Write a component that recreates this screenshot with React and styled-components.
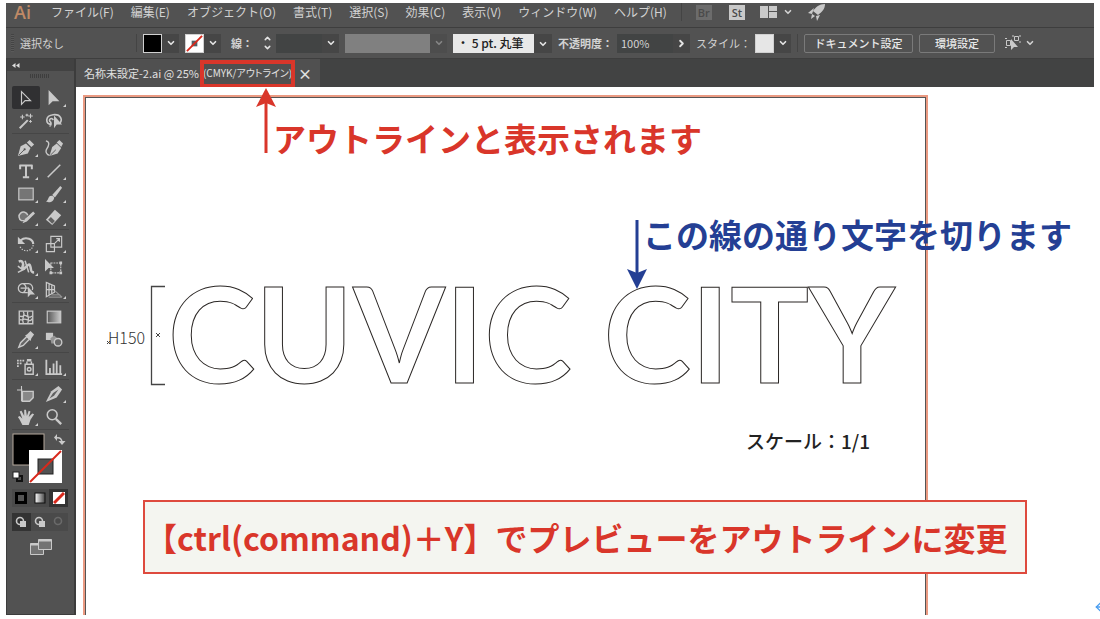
import React from "react";
import styled, { createGlobalStyle } from "styled-components";
import { ArrowLeft, ChevronDown, ChevronRight, ChevronUp } from "lucide-react";

const menus = [
  "ファイル(F)",
  "編集(E)",
  "オブジェクト(O)",
  "書式(T)",
  "選択(S)",
  "効果(C)",
  "表示(V)",
  "ウィンドウ(W)",
  "ヘルプ(H)",
];

const L = "#c9c9c9";

const toolGroups = [
  [
    {
      name: "選択",
      active: true,
      art: <path d="M5 3v14l4-4h6z" fill="none" stroke={L} strokeWidth="1.3" />,
    },
    { name: "ダイレクト選択", more: true, art: <path d="M4 1v17l4.500-4.500H16z" fill={L} /> },
    {
      name: "自動選択",
      art: (
        <g stroke={L} fill="none">
          <path d="M3 18L12 9" strokeWidth="2.2" />
          <path d="M6 3v5M3.5 5.5h5M11 2v3M9.5 3.5h3M15 2v5M12.5 4.5h5M15 9v3M13.5 10.5h3" strokeWidth="1.2" />
        </g>
      ),
    },
    {
      name: "なげなわ",
      art: (
        <g>
          <path
            d="M7 14C0 13 0 4 9 3s11 6 7 10M9 9a2 2 0 1 0-3 2c1 1 1 4-1 5"
            fill="none"
            stroke={L}
            strokeWidth="1.8"
          />
          <path d="M10 4v14l3-4h6z" fill={L} />
        </g>
      ),
    },
  ],
  [
    {
      name: "ペン",
      more: true,
      art: (
        <g>
          <path d="M1 19l3-11 6-3 5 5-3 6z" fill={L} />
          <path d="M11 4l3-3 5 5-3 3z" fill={L} />
          <path d="M2 18L8 12" stroke="#525252" />
          <circle cx="8.500" cy="11.500" r="1.200" fill="#525252" />
        </g>
      ),
    },
    {
      name: "曲線",
      art: (
        <g>
          <path d="M5 19l3-10 5-4 5 5-4 6z" fill={L} />
          <path d="M13 4l3-3 4 4-2 4z" fill={L} />
          <path d="M1 2c5 1 3 6 1 9s0 7 3 7" fill="none" stroke={L} strokeWidth="1.5" />
          <path d="M6 18L12 12" stroke="#525252" />
        </g>
      ),
    },
    {
      name: "文字",
      more: true,
      art: <path d="M3 4h14M3.5 3v5M16.5 3v5M10 4v13M6.5 17h7" stroke={L} strokeWidth="2.2" />,
    },
    { name: "直線", more: true, art: <path d="M3 17L17 3" stroke={L} strokeWidth="1.7" /> },
    {
      name: "長方形",
      more: true,
      art: <rect x="2" y="3.5" width="16" height="13" fill="#757575" stroke={L} strokeWidth="1.3" />,
    },
    {
      name: "ブラシ",
      more: true,
      art: (
        <g fill={L}>
          <path d="M1 18c3 0 2-6 6-6s4 4 1 6-4 1-7 0z" />
          <path d="M8 11l9-10 2 2-8 11z" />
        </g>
      ),
    },
    {
      name: "Shaper",
      more: true,
      art: (
        <g>
          <path d="M8 14H5a5 5 0 1 1 7-6" fill="#757575" stroke={L} strokeWidth="1.6" />
          <path d="M6 17l3-5 9-8 2 2-9 9z" fill={L} />
        </g>
      ),
    },
    {
      name: "消しゴム",
      more: true,
      art: (
        <g>
          <path d="M1 13L11 2l7 6-10 11z" fill={L} />
          <path d="M3.500 13l3-3 4.500 4.500-3 3z" fill="#606060" />
        </g>
      ),
    },
  ],
  [
    {
      name: "回転",
      more: true,
      art: (
        <g fill="none" stroke={L}>
          <path d="M4 6c6-5 14-1 14 4" strokeWidth="2.4" />
          <path d="M18 11c-1 8-12 9-15 1" strokeWidth="1.3" strokeDasharray="1.5 1.5" />
          <path d="M1 2v8h8z" fill={L} stroke="none" />
        </g>
      ),
    },
    {
      name: "拡大・縮小",
      more: true,
      art: (
        <g fill="none" stroke={L} strokeWidth="1.3">
          <path d="M6.5 1.5h12v12h-12z" />
          <path d="M1.5 9.5h9v9h-9z" />
          <path d="M11 9l5-5M12.5 4H16v3.5" />
        </g>
      ),
    },
    {
      name: "線幅",
      more: true,
      art: (
        <g fill="none" stroke={L}>
          <path d="M2 4c4-2 6 2 4 6s3 1 5-1 3-3 4 1 0 6 4 6" strokeWidth="2.8" />
          <path d="M1 16l8-4M5 12l-4-3M9 3l4 13" strokeWidth="1.7" />
        </g>
      ),
    },
    {
      name: "自由変形",
      art: (
        <g>
          <path d="M6.5 5.5h11v11h-11z" fill="none" stroke={L} strokeWidth="1.2" strokeDasharray="2 1" />
          <path d="M0 1v14l4-4h6zM16 4h3v3h-3zM16 15h3v3h-3zM5 15h3v3H5z" fill={L} />
        </g>
      ),
    },
    {
      name: "シェイプ形成",
      more: true,
      art: (
        <g>
          <path
            d="M12 13H6a5 5 0 1 1 1-10h6a5 5 0 0 1 4 7M7 3c4 2 4 7 0 10M4 8h8"
            fill="none"
            stroke={L}
            strokeWidth="1.4"
          />
          <path d="M12 6v12l3-3h5z" fill={L} />
        </g>
      ),
    },
    {
      name: "遠近グリッド",
      more: true,
      art: (
        <g fill="none" stroke={L} strokeWidth="1.4">
          <path d="M1.5 1.5v16l9-5v-7zM1.5 9.5h9M4.5 3v13M7.5 5v9" />
          <path d="M11 11l8 7M7 15.5h10M4 18h15" stroke="#929292" />
        </g>
      ),
    },
  ],
  [
    {
      name: "メッシュ",
      art: (
        <g fill="none" stroke={L} strokeWidth="1.5">
          <path d="M2.5 3.5h15v14h-15z" />
          <path d="M3 9c5 2 4-3 8 0s4 0 6 0M3 13c5 1 4-2 8 0s4 1 6-1M7 4c3 4-3 7 0 13M12 4c-2 4 3 7 0 13" />
        </g>
      ),
    },
    {
      name: "グラデーション",
      art: (
        <g>
          <linearGradient id="toolFade">
            <stop stopColor="#555" />
            <stop offset="1" stopColor="#ccc" />
          </linearGradient>
          <rect x="2.5" y="3.5" width="15" height="13" fill="url(#toolFade)" stroke={L} strokeWidth="1.3" />
        </g>
      ),
    },
    {
      name: "スポイト",
      more: true,
      art: (
        <g>
          <path d="M2 18l2-5 7-7 3 3-7 7z" fill="#666" stroke={L} strokeWidth="1.6" />
          <path d="M9 5l2-1 4-4 4 4-3 4-1 3z" fill={L} />
        </g>
      ),
    },
    {
      name: "ブレンド",
      art: (
        <g>
          <path d="M1 2h8v8H1z" fill={L} />
          <path d="M6 8l4-3 4 3-3 6H7z" fill="#959595" />
          <circle cx="14.5" cy="12.5" r="4.2" fill="#666" stroke={L} strokeWidth="1.5" />
        </g>
      ),
    },
  ],
  [
    {
      name: "シンボルスプレー",
      more: true,
      art: (
        <g>
          <path d="M0 2h2v2H0zM3 2h2v2H3zM6 2h2v2H6zM0 5h2v2H0zM3 5h2v2H3zM0 8h2v2H0zM11 1h5v3h-5z" fill={L} />
          <path d="M9 7h9v11H9zM11 4v3M16 4v3" fill="none" stroke={L} strokeWidth="1.6" />
          <circle cx="13.5" cy="12.5" r="2" fill="none" stroke={L} strokeWidth="1.6" />
        </g>
      ),
    },
    {
      name: "棒グラフ",
      more: true,
      art: <path d="M1.5 2v16H19M5.5 17v-6M9.5 17V6M13 17V3M17 17V8" stroke={L} strokeWidth="2" fill="none" />,
    },
  ],
  [
    {
      name: "アートボード",
      art: (
        <g fill="none" stroke={L}>
          <path d="M5 1v17M0 5.500h6" strokeWidth="1.2" />
          <path d="M6 7h12v7l-4 4H6z" fill="#888" strokeWidth="1.5" />
        </g>
      ),
    },
    {
      name: "スライス",
      more: true,
      art: (
        <g>
          <path d="M1 19L7 7l8-6 4 4-6 9z" fill={L} />
          <path d="M5 15l4-6 6-4-5 7z" fill="#606060" />
        </g>
      ),
    },
    {
      name: "手のひら",
      more: true,
      art: (
        <path d="M6 19l-3-6-2-3 2-1 3 3-3-8 2-1 3 6V2h2l1 7 2-6 2 1-2 6 4-4 2 1-4 6-2 6z" fill={L} />
      ),
    },
    {
      name: "ズーム",
      art: (
        <g fill="none" stroke={L}>
          <circle cx="8" cy="7.5" r="5.5" strokeWidth="1.7" />
          <path d="M12 12l6 6" strokeWidth="2.6" />
        </g>
      ),
    },
  ],
];

const Chevron = () => <ChevronDown size={10} strokeWidth={4} />;

const App = () => {
  return (
    <Page>
      <GlobalStyle />
      <MenuBar>
        <Logo>Ai</Logo>
        <Menus>
          {menus.map((menu) => (
            <MenuButton key={menu}>{menu}</MenuButton>
          ))}
        </Menus>
        <BarLine />
        <AppBadge $dim>Br</AppBadge>
        <AppBadge>St</AppBadge>
        <LayoutButton aria-label="ワークスペース">
          <svg width="17" height="12" viewBox="0 0 17 12" fill={L}>
            <path d="M0 0h8v12H0zM9 0h8v5H9zM9 6h8v6H9z" />
          </svg>
          <Chevron />
        </LayoutButton>
        <PlainButton aria-label="GPU パフォーマンス">
          <svg width="18" height="18" viewBox="0 0 18 18" fill={L}>
            <path d="M17 1C11 1 8 4 5 8l5 4c4-3 7-6 7-11zM6 5L0 10l4 1zM12 12l-3 6-1-5zM4 11l3 2-4 3z" />
          </svg>
        </PlainButton>
      </MenuBar>

      <ControlBar>
        <Grip />
        <Status>選択なし</Status>
        <BarLine />
        <Combo>
          <Swatch $color="#000" />
          <DropButton aria-label="塗り">
            <Chevron />
          </DropButton>
        </Combo>
        <Combo>
          <Swatch $color="#fff">
            <svg width="17" height="17" viewBox="0 0 18 18">
              <rect x="6" y="6" width="6" height="6" fill="#556066" />
              <path d="M1 17L17 1" stroke="#d9291c" strokeWidth="2" />
            </svg>
          </Swatch>
          <DropButton aria-label="線の色">
            <Chevron />
          </DropButton>
        </Combo>
        <StrokeLabel htmlFor="weight">線：</StrokeLabel>
        <Combo>
          <Stepper aria-label="線幅の増減">
            <ChevronUp size={9} strokeWidth={4} />
            <ChevronDown size={9} strokeWidth={4} />
          </Stepper>
          <Field id="weight" $width={46} />
          <DropButton aria-label="線幅">
            <Chevron />
          </DropButton>
        </Combo>
        <Combo>
          <Profile />
          <DropButton aria-label="可変線幅" $dim disabled>
            <Chevron />
          </DropButton>
        </Combo>
        <BrushWrap>
          <BrushSelect aria-label="ブラシ定義" defaultValue="round">
            <option value="round">・ 5 pt. 丸筆</option>
          </BrushSelect>
          <BrushArrow>
            <Chevron />
          </BrushArrow>
        </BrushWrap>
        <Label htmlFor="opacity" $strong>
          不透明度：
        </Label>
        <Combo>
          <Field id="opacity" $width={56} defaultValue="100%" />
          <DropButton aria-label="不透明度">
            <ChevronRight size={11} strokeWidth={4} />
          </DropButton>
        </Combo>
        <Label as="span">スタイル：</Label>
        <Combo>
          <Swatch $color="#e6e6e6" />
          <DropButton aria-label="スタイル">
            <Chevron />
          </DropButton>
        </Combo>
        <BarLine />
        <SetupButton $width={109}>ドキュメント設定</SetupButton>
        <SetupButton $width={76}>環境設定</SetupButton>
        <AlignButton aria-label="選択オブジェクト">
          <svg width="16" height="16" viewBox="0 0 16 16" fill="none" stroke={L}>
            <path d="M1.5 5.5h4v5h-4zM9.5 1.5h4v4h-4zM0 3.5h2M0 12.5h2M8 0v2M15 0v2M14 7h2" />
            <path d="M6 4v11l3-3h4z" fill={L} stroke="none" />
          </svg>
          <Chevron />
        </AlignButton>
      </ControlBar>

      <Workspace>
        <ToolPanel>
          <PanelHead>
            <svg width="8" height="5" viewBox="0 0 8 5" fill="#ddd">
              <path d="M3.5 0v5L0 2.5zM7.5 0v5L4 2.5z" />
            </svg>
          </PanelHead>
          <PanelGrip />
          {toolGroups.map((group) => (
            <ToolGroup key={group[0].name}>
              {group.map((tool) => (
                <ToolButton key={tool.name} aria-label={tool.name} $active={tool.active}>
                  <svg width="18" height="18" viewBox="0 0 20 20">
                    {tool.art}
                  </svg>
                  {tool.more && <Corner />}
                </ToolButton>
              ))}
            </ToolGroup>
          ))}
          <PaintBox>
            <svg width="56" height="54" viewBox="0 0 56 54">
              <rect x="1" y="1" width="31" height="31" fill="#000" stroke="#b5a99d" />
              <rect x="17" y="17" width="33" height="33" fill="#fff" />
              <rect x="26" y="26" width="15" height="15" fill="#525252" stroke="#222" />
              <path d="M18 49L49 18" stroke="#d9291c" strokeWidth="2" />
              <path d="M44 5c4-1 6 1 6 5" fill="none" stroke={L} strokeWidth="1.5" />
              <path d="M45 1v7l-3-3.5zM46.5 8h7L50 12z" fill={L} />
              <rect x="5" y="43" width="5" height="5" fill="none" stroke="#111" strokeWidth="2" />
              <rect x="1" y="39" width="6" height="6" fill="#fff" stroke="#222" />
            </svg>
          </PaintBox>
          <ModeRow>
            <ModeButton aria-label="カラー">
              <svg width="12" height="12">
                <rect x="1.5" y="1.5" width="9" height="9" fill="#555" stroke="#000" strokeWidth="3" />
              </svg>
            </ModeButton>
            <ModeButton aria-label="グラデーション">
              <svg width="12" height="12">
                <linearGradient id="modeFade">
                  <stop stopColor="#fff" />
                  <stop offset="1" stopColor="#444" />
                </linearGradient>
                <rect x="1" y="1" width="10" height="10" fill="url(#modeFade)" stroke="#111" />
              </svg>
            </ModeButton>
            <ModeButton aria-label="なし" $active>
              <svg width="12" height="12">
                <rect width="12" height="12" fill="#fff" />
                <path d="M1 11L11 1" stroke="#d9291c" strokeWidth="3" />
              </svg>
            </ModeButton>
          </ModeRow>
          <ModeRow>
            {["標準描画", "背面描画", "内側描画"].map((name, i) => (
              <ModeButton key={name} aria-label={name} $active={i === 0} $dim={i === 2}>
                <svg width="12" height="12" viewBox="0 0 12 12">
                  <circle cx="5" cy="5" r="3.5" fill="none" stroke={L} strokeWidth="1.6" />
                  {i < 2 && <path d="M5 5h6v6H5z" fill={L} />}
                </svg>
              </ModeButton>
            ))}
          </ModeRow>
          <ScreenButton aria-label="スクリーンモード">
            <svg width="22" height="16" viewBox="0 0 22 16" fill="#747474" stroke={L}>
              <path d="M.5 4.5h13v11H.5z" />
              <path d="M.5 5.5h13" strokeWidth="2" />
              <path d="M8.5.5h13v10h-13z" />
              <path d="M8.5 1.5h13" strokeWidth="2" />
            </svg>
          </ScreenButton>
        </ToolPanel>

        <Document>
          <TabBar>
            <Tab>
              <span>名称未設定-2.ai @ 25%</span>
              <ViewMode>(CMYK/アウトライン)</ViewMode>
              <CloseButton aria-label="閉じる">×</CloseButton>
              <RedFrame />
            </Tab>
          </TabBar>
          <Canvas>
            <Artboard />
            <Arrow $x={180} $y={1} width="20" height="65" viewBox="0 0 20 65" fill="#d9362a">
              <path d="M8.5 14h3v51h-3z" />
              <path d="M10 0l10 19-10-4-10 4z" />
            </Arrow>
            <Note $x={197} $y={27} $color="#d9362a">
              アウトラインと表示されます
            </Note>
            <Arrow $x={551} $y={133} width="20" height="69" viewBox="0 0 20 69" fill="#243f94">
              <path d="M8.5 0h3v55h-3z" />
              <path d="M10 69L0 49l10 4 10-4z" />
            </Arrow>
            <Note $x={567} $y={123} $color="#243f94">
              この線の通り文字を切ります
            </Note>
            <HeightMark>H150</HeightMark>
            <Arrow $x={30} $y={198} width="60" height="101" viewBox="0 0 60 101" fill="none" stroke="#444">
              <path d="M59 1.5H45.5v98H59" strokeWidth="1.3" />
              <path d="M50 48l4 4M54 48l-4 4M1 56l3 3M4 56l-3 3" />
            </Arrow>
            <Lettering>CUVIC CITY</Lettering>
            <ScaleNote>スケール：1/1</ScaleNote>
            <Banner>【ctrl(command)＋Y】でプレビューをアウトラインに変更</Banner>
          </Canvas>
        </Document>
      </Workspace>
      <BackLink href="#" aria-label="戻る">
        <ArrowLeft size={16} />
      </BackLink>
    </Page>
  );
};

export default App;

const GlobalStyle = createGlobalStyle`
* { box-sizing: border-box; }
body {
  margin: 0;
  background: #fff;
  font-family: "Noto Sans CJK JP", "Noto Sans", sans-serif;
}
button, input, select {
  margin: 0;
  padding: 0;
  border: 0;
  background: none;
  color: inherit;
  font: inherit;
}
svg { display: block; flex: none; }
`;

const Page = styled.div`
  position: relative;
  display: flex;
  flex-direction: column;
  min-height: 100vh;
  padding: 3px 6px 4px;
  overflow: hidden;
  color: #d2d2d2;
  font-size: 12px;
  line-height: 16px;
  white-space: nowrap;
`;

const MenuBar = styled.header`
  display: flex;
  align-items: center;
  height: 24px;
  padding: 0 8px 6px;
  background: #525252;
`;

const Logo = styled.div`
  width: 37px;
  color: #c08a66;
  font-family: "Open Sans", sans-serif;
  font-size: 18px;
  font-weight: 600;
`;

const Menus = styled.nav`
  display: flex;
  gap: 17px;
  margin-right: 14px;
`;

const MenuButton = styled.button``;

const BarLine = styled.span`
  flex: none;
  width: 1px;
  height: 18px;
  background: #444;
`;

const AppBadge = styled.span`
  width: 16px;
  height: 15px;
  margin-left: ${(p) => (p.$dim ? 14 : 17)}px;
  background: ${(p) => (p.$dim ? "#6c6c6c" : "#c9c9c9")};
  color: #4a4a4a;
  font-family: "Open Sans", sans-serif;
  font-size: 11px;
  font-weight: 600;
  line-height: 15px;
  text-align: center;
`;

const PlainButton = styled.button`
  display: flex;
  align-items: center;
`;

const LayoutButton = styled(PlainButton)`
  gap: 6px;
  margin: 0 15px;
`;

const ControlBar = styled.div`
  display: flex;
  align-items: center;
  gap: 6px;
  height: 32px;
  padding-left: 5px;
  border-top: 1px solid #3e3e3e;
  border-bottom: 1px solid #3e3e3e;
  background: #525252;
  font-size: 11px;
`;

const Grip = styled.span`
  width: 3px;
  height: 18px;
  background: repeating-linear-gradient(#444 0 1px, #5a5a5a 1px 2px);
`;

const Status = styled.span`
  width: 110px;
`;

const Combo = styled.div`
  display: flex;
  flex: none;
  align-items: center;
  height: 19px;
`;

const Swatch = styled.span`
  width: 19px;
  height: 19px;
  border: 1px solid #d0d0d0;
  background: ${(p) => p.$color};
`;

const DropButton = styled.button`
  display: flex;
  align-items: center;
  justify-content: center;
  width: 17px;
  height: 19px;
  background: #464646;
  color: #e4e4e4;
  opacity: ${(p) => (p.$dim ? 0.35 : 1)};
`;

const Label = styled.label`
  width: 53px;
  font-weight: ${(p) => (p.$strong ? 700 : 400)};
`;

const StrokeLabel = styled.label`
  width: 21px;
  margin-left: 4px;
  font-weight: 700;
`;

const Stepper = styled.button`
  display: flex;
  flex-direction: column;
  align-items: center;
  width: 18px;
  color: #e4e4e4;
`;

const Field = styled.input`
  width: ${(p) => p.$width}px;
  height: 19px;
  padding-left: 4px;
  background: #424444;
`;

const Profile = styled.span`
  width: 85px;
  height: 19px;
  background: #808080;
`;

const BrushWrap = styled.div`
  position: relative;
  flex: none;
`;

const BrushSelect = styled.select`
  display: block;
  width: 99px;
  height: 19px;
  padding-left: 4px;
  appearance: none;
  background: linear-gradient(to right, #e8e8e8 81px, #464646 81px);
  color: #222;
  font-size: 12px;
  font-weight: 500;
`;

const BrushArrow = styled.span`
  position: absolute;
  top: 5px;
  right: 4px;
  color: #e4e4e4;
  pointer-events: none;
`;

const SetupButton = styled.button`
  flex: none;
  width: ${(p) => p.$width}px;
  height: 19px;
  border: 1px solid #7a7a7a;
  border-radius: 2px;
  color: #e8e8e8;
  font-weight: 500;
  line-height: 16px;
`;

const AlignButton = styled(PlainButton)`
  gap: 4px;
  margin-left: 4px;
`;

const Workspace = styled.div`
  display: flex;
  flex: 1;
`;

const ToolPanel = styled.aside`
  flex: none;
  width: 70px;
  border: solid #3c3c3c;
  border-width: 0 2px 1px 1px;
  background: #525252;
`;

const PanelHead = styled.div`
  height: 12px;
  padding: 4px 5px;
  background: #424242;
`;

const PanelGrip = styled.div`
  width: 19px;
  height: 4px;
  margin: 3px 0 8px 23px;
  background: repeating-linear-gradient(90deg, #3e3e3e 0 1px, #525252 1px 2px);
`;

const ToolGroup = styled.div`
  display: grid;
  grid-template-columns: 28px 28px;
  margin: 0 5px 2px;
  padding-bottom: 1px;
  border-bottom: 1px solid #464646;
`;

const ToolButton = styled.button`
  position: relative;
  display: flex;
  align-items: center;
  justify-content: center;
  height: 23px;
  border-radius: 2px;
  background: ${(p) => (p.$active ? "#303032" : "none")};
`;

const Corner = styled.span`
  position: absolute;
  right: 2px;
  bottom: 2px;
  border: solid transparent;
  border-width: 0 0 3px 3px;
  border-bottom-color: #d0d0d0;
`;

const PaintBox = styled.div`
  padding: 1px 5px;
`;

const ModeRow = styled.div`
  display: grid;
  grid-template-columns: repeat(3, 1fr);
  height: 18px;
  margin: 1px 6px 6px 5px;
  background: #4a4a4a;
`;

const ModeButton = styled.button`
  display: flex;
  align-items: center;
  justify-content: center;
  background: ${(p) => (p.$active ? "#333" : "none")};
  svg { opacity: ${(p) => (p.$dim ? 0.25 : 1)}; }
`;

const ScreenButton = styled.button`
  display: block;
  margin: 8px auto;
`;

const Document = styled.main`
  display: flex;
  flex: 1;
  flex-direction: column;
  min-width: 0;
`;

const TabBar = styled.div`
  height: 28px;
  background: #424343;
`;

const Tab = styled.div`
  position: relative;
  display: flex;
  align-items: center;
  width: 244px;
  height: 28px;
  padding-left: 8px;
  background: #505050;
  color: #e0e0e0;
  font-size: 11px;
  font-feature-settings: "palt";
`;

const ViewMode = styled.span`
  margin-left: 4px;
  font-size: 10px;
`;

const CloseButton = styled.button`
  margin: 0 8px 0 auto;
  font-size: 14px;
  font-weight: 700;
`;

const RedFrame = styled.span`
  position: absolute;
  top: 1px;
  left: 124px;
  width: 95px;
  height: 28px;
  border: 4px solid #d9362a;
`;

const Canvas = styled.section`
  position: relative;
  display: flex;
  flex: 1;
  background: #fff;
`;

const Artboard = styled.div`
  flex: 1;
  margin: 8px 166px 0 7px;
  border: 2px solid #eb9a82;
  border-bottom: 0;
  box-shadow: inset 1px 1px #555, inset -1px 0 #555;
`;

const Arrow = styled.svg`
  position: absolute;
  left: ${(p) => p.$x}px;
  top: ${(p) => p.$y}px;
`;

const Note = styled.p`
  position: absolute;
  left: ${(p) => p.$x}px;
  top: ${(p) => p.$y}px;
  margin: 0;
  color: ${(p) => p.$color};
  font-size: 33px;
  font-weight: 700;
  line-height: 48px;
`;

const HeightMark = styled.span`
  position: absolute;
  left: 32px;
  top: 240px;
  color: #333;
  font-size: 16px;
  font-weight: 300;
  line-height: 20px;
`;

const Lettering = styled.h1`
  position: absolute;
  left: 92px;
  top: 167px;
  margin: 0;
  color: transparent;
  font-family: Lato, sans-serif;
  font-size: 132px;
  font-weight: 700;
  line-height: 156px;
  -webkit-text-stroke: 1px #2b2725;
`;

const ScaleNote = styled.p`
  position: absolute;
  left: 670px;
  top: 340px;
  margin: 0;
  color: #222;
  font-size: 19px;
  font-weight: 500;
  line-height: 28px;
`;

const Banner = styled.p`
  position: absolute;
  left: 67px;
  right: 67px;
  top: 413px;
  margin: 0;
  padding-right: 18px;
  border: 2px solid #de4a3e;
  background: #f4f5f0;
  color: #d9362a;
  font-size: 32px;
  font-weight: 700;
  line-height: 70px;
  text-align: center;
`;

const BackLink = styled.a`
  position: absolute;
  right: -9px;
  bottom: 4px;
  color: #4a9df0;
`;
